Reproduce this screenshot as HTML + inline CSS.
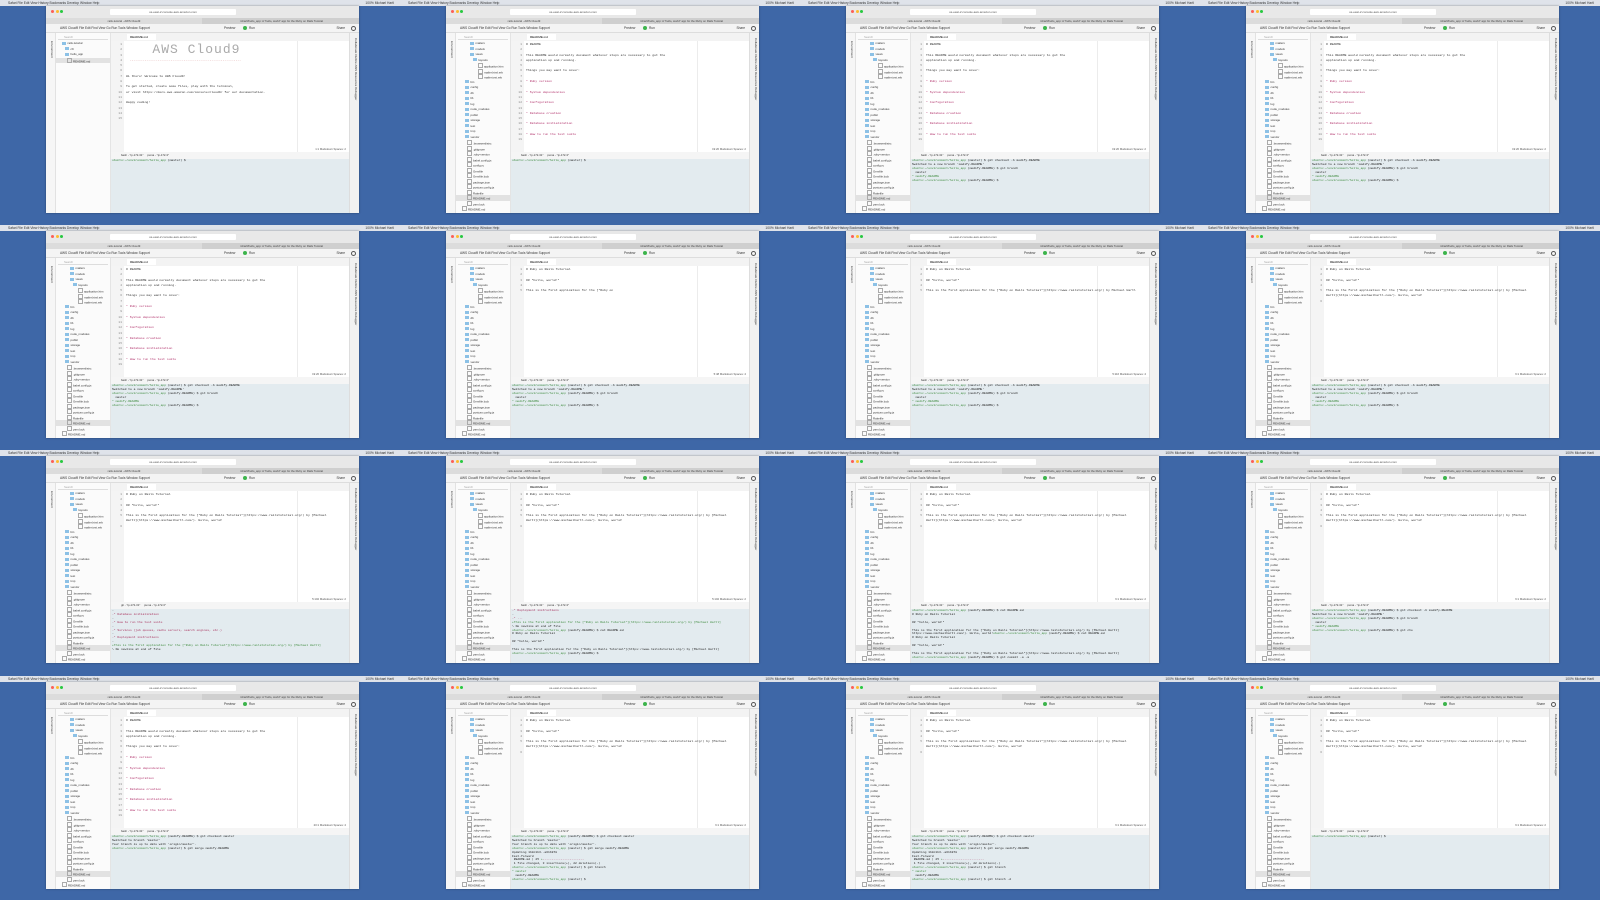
<!DOCTYPE html>
<html><head><meta charset="utf-8">
<style>
*{margin:0;padding:0;box-sizing:border-box}
body{width:1600px;height:900px;background:#3e67a7;position:relative;overflow:hidden;font-family:"Liberation Sans",sans-serif}
.mb{position:absolute;height:6px;width:400px;background:#dfe3ea;font-size:3.3px;line-height:6px;color:#333;white-space:nowrap;overflow:hidden;padding-left:8px}
.mb b{position:absolute;right:6px;top:0;font-weight:normal}
.w{position:absolute;width:313px;height:207px;background:#fff;overflow:hidden;box-shadow:0 0 2px rgba(0,0,0,.4)}
.tb{position:absolute;left:0;top:0;width:313px;height:12px;background:#e8e8e8}
.tl{position:absolute;top:4px;width:3px;height:3px;border-radius:50%}
.ad{position:absolute;left:64px;top:3px;width:126px;height:6px;background:#fff;border-radius:1px;font-size:3px;line-height:6px;text-align:center;color:#555}
.ts{position:absolute;left:0;top:12px;width:313px;height:6px;background:#cfcfcf;font-size:2.8px;line-height:6px;color:#444}
.ts i{position:absolute;left:0;top:0;width:156px;height:6px;background:#dcdcdc;text-align:center;font-style:normal}
.ts u{position:absolute;left:158px;width:155px;text-align:center;text-decoration:none}
.im{position:absolute;left:0;top:18px;width:313px;height:9px;background:#f4f4f4;border-bottom:1px solid #ddd;font-size:3.2px;line-height:9px;color:#333;padding-left:14px;white-space:nowrap}
.im .run{position:absolute;left:197px;color:#333}
.im .run:before{content:"";display:inline-block;width:4px;height:4px;border-radius:50%;background:#3cb44b;margin-right:2px;vertical-align:-1px}
.im .gear{position:absolute;right:3px;top:2px;width:5px;height:5px;border-radius:50%;border:1.3px solid #555}
.ls{position:absolute;left:0;top:27px;width:10px;height:180px;background:#f6f6f6;border-right:1px solid #e2e2e2}
.rs{position:absolute;right:0;top:27px;width:10px;height:180px;background:#f1f1f1;border-left:1px solid #ddd}
.vt{position:absolute;transform:rotate(90deg);transform-origin:0 0;font-size:3px;white-space:nowrap;color:#333}
.tr{position:absolute;left:10px;top:27px;width:55px;height:180px;background:#fbfbfb;border-right:1px solid #e4e4e4;font-size:2.9px;color:#333}
.tr .s{height:6px;margin:1px 2px;border-bottom:1px solid #ddd;color:#aaa;line-height:6px;padding-left:6px}
.tr p{height:5.5px;line-height:5.5px;white-space:nowrap}
.tr p.f:before{content:"";display:inline-block;width:4px;height:3px;background:#8cc1e6;margin-right:1.5px;vertical-align:-0.5px}
.tr p.d:before{content:"";display:inline-block;width:2.5px;height:3px;border:0.5px solid #aaa;margin-right:1.5px;vertical-align:-0.5px}
.tr p.sel{background:#e2e2e2}
.et{position:absolute;left:65px;top:27px;width:238px;height:8px;background:#f3f3f3;font-size:3px;line-height:8px;padding-left:16px}
.et span{background:#fff;padding:1px 8px 1px 3px}
.ed{position:absolute;left:65px;top:35px;width:238px;height:111px;background:#fff}
.gu{position:absolute;left:0;top:0;width:13px;height:111px;background:#f4f4f4;font-family:"Liberation Mono",monospace;font-size:3px;line-height:5.3px;text-align:right;padding-right:2px;color:#888;padding-top:1px}
.mg{position:absolute;left:186px;top:0;width:1px;height:111px;background:#ececec}
.cd{position:absolute;left:15px;top:1px;font-family:"Liberation Mono",monospace;font-size:3.1px;line-height:5.3px;color:#333;white-space:pre}
.cd .p{color:#b0306a}
.st{position:absolute;right:3px;bottom:1px;font-size:2.8px;color:#555}
.tt{position:absolute;left:65px;top:146px;width:238px;height:7px;background:#f5f5f5;font-size:2.8px;line-height:7px;padding-left:10px;white-space:pre;color:#333}
.tm{position:absolute;left:65px;top:153px;width:238px;height:54px;background:#e3ebef;font-family:"Liberation Mono",monospace;font-size:3px;line-height:3.9px;color:#222;white-space:pre;padding-left:1px;overflow:hidden}
.tm .g{color:#3c8a3c}
.tm .r{color:#a8305c}
</style></head><body>

<!-- template repeated -->
<div id="tiles"></div>

<!-- Row 1 -->
<div class="mb" style="left:0;top:0">Safari  File  Edit  View  History  Bookmarks  Develop  Window  Help<b>100% Michael Hartl</b></div>
<div class="mb" style="left:400px;top:0">Safari  File  Edit  View  History  Bookmarks  Develop  Window  Help<b>100% Michael Hartl</b></div>
<div class="mb" style="left:800px;top:0">Safari  File  Edit  View  History  Bookmarks  Develop  Window  Help<b>100% Michael Hartl</b></div>
<div class="mb" style="left:1200px;top:0">Safari  File  Edit  View  History  Bookmarks  Develop  Window  Help<b>100% Michael Hartl</b></div>
<div class="mb" style="left:0;top:225px">Safari  File  Edit  View  History  Bookmarks  Develop  Window  Help<b>100% Michael Hartl</b></div>
<div class="mb" style="left:400px;top:225px">Safari  File  Edit  View  History  Bookmarks  Develop  Window  Help<b>100% Michael Hartl</b></div>
<div class="mb" style="left:800px;top:225px">Safari  File  Edit  View  History  Bookmarks  Develop  Window  Help<b>100% Michael Hartl</b></div>
<div class="mb" style="left:1200px;top:225px">Safari  File  Edit  View  History  Bookmarks  Develop  Window  Help<b>100% Michael Hartl</b></div>
<div class="mb" style="left:0;top:450px">Safari  File  Edit  View  History  Bookmarks  Develop  Window  Help<b>100% Michael Hartl</b></div>
<div class="mb" style="left:400px;top:450px">Safari  File  Edit  View  History  Bookmarks  Develop  Window  Help<b>100% Michael Hartl</b></div>
<div class="mb" style="left:800px;top:450px">Safari  File  Edit  View  History  Bookmarks  Develop  Window  Help<b>100% Michael Hartl</b></div>
<div class="mb" style="left:1200px;top:450px">Safari  File  Edit  View  History  Bookmarks  Develop  Window  Help<b>100% Michael Hartl</b></div>
<div class="mb" style="left:0;top:676px">Safari  File  Edit  View  History  Bookmarks  Develop  Window  Help<b>100% Michael Hartl</b></div>
<div class="mb" style="left:400px;top:676px">Safari  File  Edit  View  History  Bookmarks  Develop  Window  Help<b>100% Michael Hartl</b></div>
<div class="mb" style="left:800px;top:676px">Safari  File  Edit  View  History  Bookmarks  Develop  Window  Help<b>100% Michael Hartl</b></div>
<div class="mb" style="left:1200px;top:676px">Safari  File  Edit  View  History  Bookmarks  Develop  Window  Help<b>100% Michael Hartl</b></div>

<!-- Tile 1 -->
<div class="w" style="left:46px;top:6px">
<div class="tb"><div class="tl" style="left:5px;background:#fc5f57"></div><div class="tl" style="left:9.5px;background:#fdbc2e"></div><div class="tl" style="left:14px;background:#28c840"></div><div class="ad">us-east-2.console.aws.amazon.com</div></div>
<div class="ts"><i>rails-tutorial - AWS Cloud9</i><u>mhartl/hello_app: A "hello, world" app for the Ruby on Rails Tutorial</u></div>
<div class="im">AWS Cloud9   File   Edit   Find   View   Go   Run   Tools   Window   Support<span class="run">Run</span><span style="position:absolute;left:178px">Preview</span><span style="position:absolute;right:14px">Share</span><span class="gear"></span></div>
<div class="ls"><div class="vt" style="left:8px;top:8px">Environment</div></div>
<div class="tr"><div class="s">Search</div><p style="padding-left:6px" class="f">rails-tutorial</p><p style="padding-left:9px" class="f">c9</p><p style="padding-left:9px" class="f">hello_app</p><p style="padding-left:11px" class="d sel">README.md</p></div>
<div class="et"><span>README.md</span></div>
<div class="ed"><div class="gu">1<br>2<br>3<br>4<br>5<br>6<br>7<br>8<br>9<br>10<br>11<br>12<br>13<br>14<br>15</div><div class="mg"></div>
<div class="cd"><span style="font-size:13px;line-height:16px;color:#aaa;letter-spacing:1px">   AWS Cloud9</span>
<span style="color:#c77">  ------------------------------------------------------------</span>


Hi there! Welcome to AWS Cloud9!

To get started, create some files, play with the terminal,
or visit https://docs.aws.amazon.com/console/cloud9/ for our documentation.

Happy coding!</div><div class="st">1:1  Markdown  Spaces: 2</div></div>
<div class="tt">bash - "ip-172-31"     puma - "ip-172-3"</div>
<div class="tm"><span class="g">ubuntu:~/environment/hello_app</span> (master) $ </div>
<div class="rs"><div class="vt" style="left:8px;top:5px">Collaborate   Outline   AWS Resources   Debugger</div></div>
</div>


<!-- Tile 2 -->
<div class="w" style="left:446px;top:6px">
<div class="tb"><div class="tl" style="left:5px;background:#fc5f57"></div><div class="tl" style="left:9.5px;background:#fdbc2e"></div><div class="tl" style="left:14px;background:#28c840"></div><div class="ad">us-east-2.console.aws.amazon.com</div></div>
<div class="ts"><i>rails-tutorial - AWS Cloud9</i><u>mhartl/hello_app: A "hello, world" app for the Ruby on Rails Tutorial</u></div>
<div class="im">AWS Cloud9   File   Edit   Find   View   Go   Run   Tools   Window   Support<span class="run">Run</span><span style="position:absolute;left:178px">Preview</span><span style="position:absolute;right:14px">Share</span><span class="gear"></span></div>
<div class="ls"><div class="vt" style="left:8px;top:8px">Environment</div></div>
<div class="tr"><div class="s">Search</div><p style="padding-left:14px" class="f">mailers</p><p style="padding-left:14px" class="f">models</p><p style="padding-left:14px" class="f">views</p><p style="padding-left:17px" class="f">layouts</p><p style="padding-left:22px" class="d">application.htm</p><p style="padding-left:22px" class="d">mailer.html.erb</p><p style="padding-left:22px" class="d">mailer.text.erb</p><p style="padding-left:9px" class="f">bin</p><p style="padding-left:9px" class="f">config</p><p style="padding-left:9px" class="f">db</p><p style="padding-left:9px" class="f">lib</p><p style="padding-left:9px" class="f">log</p><p style="padding-left:9px" class="f">node_modules</p><p style="padding-left:9px" class="f">public</p><p style="padding-left:9px" class="f">storage</p><p style="padding-left:9px" class="f">test</p><p style="padding-left:9px" class="f">tmp</p><p style="padding-left:9px" class="f">vendor</p><p style="padding-left:11px" class="d">.browserslistrc</p><p style="padding-left:11px" class="d">.gitignore</p><p style="padding-left:11px" class="d">.ruby-version</p><p style="padding-left:11px" class="d">babel.config.js</p><p style="padding-left:11px" class="d">config.ru</p><p style="padding-left:11px" class="d">Gemfile</p><p style="padding-left:11px" class="d">Gemfile.lock</p><p style="padding-left:11px" class="d">package.json</p><p style="padding-left:11px" class="d">postcss.config.js</p><p style="padding-left:11px" class="d">Rakefile</p><p style="padding-left:11px" class="d sel">README.md</p><p style="padding-left:11px" class="d">yarn.lock</p><p style="padding-left:6px" class="d">README.md</p></div>
<div class="et"><span>README.md</span></div>
<div class="ed"><div class="gu">1<br>2<br>3<br>4<br>5<br>6<br>7<br>8<br>9<br>10<br>11<br>12<br>13<br>14<br>15<br>16<br>17<br>18<br>19</div><div class="mg"></div>
<div class="cd"># README

This README would normally document whatever steps are necessary to get the
application up and running.

Things you may want to cover:

<span class="p">* Ruby version</span>

<span class="p">* System dependencies</span>

<span class="p">* Configuration</span>

<span class="p">* Database creation</span>

<span class="p">* Database initialization</span>

<span class="p">* How to run the test suite</span>
</div><div class="st">19:20  Markdown  Spaces: 2</div></div>
<div class="tt">bash - "ip-172-31"     puma - "ip-172-3"</div>
<div class="tm"><span class="g">ubuntu:~/environment/hello_app</span> (master) $ </div>
<div class="rs"><div class="vt" style="left:8px;top:5px">Collaborate   Outline   AWS Resources   Debugger</div></div>
</div>

<!-- Tiles 3-16 reuse the same structure -->
<div class="w" style="left:846px;top:6px">
<div class="tb"><div class="tl" style="left:5px;background:#fc5f57"></div><div class="tl" style="left:9.5px;background:#fdbc2e"></div><div class="tl" style="left:14px;background:#28c840"></div><div class="ad">us-east-2.console.aws.amazon.com</div></div>
<div class="ts"><i>rails-tutorial - AWS Cloud9</i><u>mhartl/hello_app: A "hello, world" app for the Ruby on Rails Tutorial</u></div>
<div class="im">AWS Cloud9   File   Edit   Find   View   Go   Run   Tools   Window   Support<span class="run">Run</span><span style="position:absolute;left:178px">Preview</span><span style="position:absolute;right:14px">Share</span><span class="gear"></span></div>
<div class="ls"><div class="vt" style="left:8px;top:8px">Environment</div></div>
<div class="tr"><div class="s">Search</div><p style="padding-left:14px" class="f">mailers</p><p style="padding-left:14px" class="f">models</p><p style="padding-left:14px" class="f">views</p><p style="padding-left:17px" class="f">layouts</p><p style="padding-left:22px" class="d">application.htm</p><p style="padding-left:22px" class="d">mailer.html.erb</p><p style="padding-left:22px" class="d">mailer.text.erb</p><p style="padding-left:9px" class="f">bin</p><p style="padding-left:9px" class="f">config</p><p style="padding-left:9px" class="f">db</p><p style="padding-left:9px" class="f">lib</p><p style="padding-left:9px" class="f">log</p><p style="padding-left:9px" class="f">node_modules</p><p style="padding-left:9px" class="f">public</p><p style="padding-left:9px" class="f">storage</p><p style="padding-left:9px" class="f">test</p><p style="padding-left:9px" class="f">tmp</p><p style="padding-left:9px" class="f">vendor</p><p style="padding-left:11px" class="d">.browserslistrc</p><p style="padding-left:11px" class="d">.gitignore</p><p style="padding-left:11px" class="d">.ruby-version</p><p style="padding-left:11px" class="d">babel.config.js</p><p style="padding-left:11px" class="d">config.ru</p><p style="padding-left:11px" class="d">Gemfile</p><p style="padding-left:11px" class="d">Gemfile.lock</p><p style="padding-left:11px" class="d">package.json</p><p style="padding-left:11px" class="d">postcss.config.js</p><p style="padding-left:11px" class="d">Rakefile</p><p style="padding-left:11px" class="d sel">README.md</p><p style="padding-left:11px" class="d">yarn.lock</p><p style="padding-left:6px" class="d">README.md</p></div>
<div class="et"><span>README.md</span></div>
<div class="ed"><div class="gu">1<br>2<br>3<br>4<br>5<br>6<br>7<br>8<br>9<br>10<br>11<br>12<br>13<br>14<br>15<br>16<br>17<br>18<br>19</div><div class="mg"></div>
<div class="cd"># README

This README would normally document whatever steps are necessary to get the
application up and running.

Things you may want to cover:

<span class="p">* Ruby version</span>

<span class="p">* System dependencies</span>

<span class="p">* Configuration</span>

<span class="p">* Database creation</span>

<span class="p">* Database initialization</span>

<span class="p">* How to run the test suite</span>
</div><div class="st">19:20  Markdown  Spaces: 2</div></div>
<div class="tt">bash - "ip-172-31"     puma - "ip-172-3"</div>
<div class="tm"><span class="g">ubuntu:~/environment/hello_app</span> (master) $ git checkout -b modify-README
Switched to a new branch 'modify-README'
<span class="g">ubuntu:~/environment/hello_app</span> (modify-README) $ git branch
  master
<span class="g">* modify-README</span>
<span class="g">ubuntu:~/environment/hello_app</span> (modify-README) $ </div>
<div class="rs"><div class="vt" style="left:8px;top:5px">Collaborate   Outline   AWS Resources   Debugger</div></div>
</div>

<div class="w" style="left:1246px;top:6px">
<div class="tb"><div class="tl" style="left:5px;background:#fc5f57"></div><div class="tl" style="left:9.5px;background:#fdbc2e"></div><div class="tl" style="left:14px;background:#28c840"></div><div class="ad">us-east-2.console.aws.amazon.com</div></div>
<div class="ts"><i>rails-tutorial - AWS Cloud9</i><u>mhartl/hello_app: A "hello, world" app for the Ruby on Rails Tutorial</u></div>
<div class="im">AWS Cloud9   File   Edit   Find   View   Go   Run   Tools   Window   Support<span class="run">Run</span><span style="position:absolute;left:178px">Preview</span><span style="position:absolute;right:14px">Share</span><span class="gear"></span></div>
<div class="ls"><div class="vt" style="left:8px;top:8px">Environment</div></div>
<div class="tr"><div class="s">Search</div><p style="padding-left:14px" class="f">mailers</p><p style="padding-left:14px" class="f">models</p><p style="padding-left:14px" class="f">views</p><p style="padding-left:17px" class="f">layouts</p><p style="padding-left:22px" class="d">application.htm</p><p style="padding-left:22px" class="d">mailer.html.erb</p><p style="padding-left:22px" class="d">mailer.text.erb</p><p style="padding-left:9px" class="f">bin</p><p style="padding-left:9px" class="f">config</p><p style="padding-left:9px" class="f">db</p><p style="padding-left:9px" class="f">lib</p><p style="padding-left:9px" class="f">log</p><p style="padding-left:9px" class="f">node_modules</p><p style="padding-left:9px" class="f">public</p><p style="padding-left:9px" class="f">storage</p><p style="padding-left:9px" class="f">test</p><p style="padding-left:9px" class="f">tmp</p><p style="padding-left:9px" class="f">vendor</p><p style="padding-left:11px" class="d">.browserslistrc</p><p style="padding-left:11px" class="d">.gitignore</p><p style="padding-left:11px" class="d">.ruby-version</p><p style="padding-left:11px" class="d">babel.config.js</p><p style="padding-left:11px" class="d">config.ru</p><p style="padding-left:11px" class="d">Gemfile</p><p style="padding-left:11px" class="d">Gemfile.lock</p><p style="padding-left:11px" class="d">package.json</p><p style="padding-left:11px" class="d">postcss.config.js</p><p style="padding-left:11px" class="d">Rakefile</p><p style="padding-left:11px" class="d sel">README.md</p><p style="padding-left:11px" class="d">yarn.lock</p><p style="padding-left:6px" class="d">README.md</p></div>
<div class="et"><span>README.md</span></div>
<div class="ed"><div class="gu">1<br>2<br>3<br>4<br>5<br>6<br>7<br>8<br>9<br>10<br>11<br>12<br>13<br>14<br>15<br>16<br>17<br>18<br>19</div><div class="mg"></div>
<div class="cd"># README

This README would normally document whatever steps are necessary to get the
application up and running.

Things you may want to cover:

<span class="p">* Ruby version</span>

<span class="p">* System dependencies</span>

<span class="p">* Configuration</span>

<span class="p">* Database creation</span>

<span class="p">* Database initialization</span>

<span class="p">* How to run the test suite</span>
</div><div class="st">19:20  Markdown  Spaces: 2</div></div>
<div class="tt">bash - "ip-172-31"     puma - "ip-172-3"</div>
<div class="tm"><span class="g">ubuntu:~/environment/hello_app</span> (master) $ git checkout -b modify-README
Switched to a new branch 'modify-README'
<span class="g">ubuntu:~/environment/hello_app</span> (modify-README) $ git branch
  master
<span class="g">* modify-README</span>
<span class="g">ubuntu:~/environment/hello_app</span> (modify-README) $ </div>
<div class="rs"><div class="vt" style="left:8px;top:5px">Collaborate   Outline   AWS Resources   Debugger</div></div>
</div>

<!-- Rows 2-4: ruby tutorial variant -->
<div class="w" style="left:46px;top:231px">
<div class="tb"><div class="tl" style="left:5px;background:#fc5f57"></div><div class="tl" style="left:9.5px;background:#fdbc2e"></div><div class="tl" style="left:14px;background:#28c840"></div><div class="ad">us-east-2.console.aws.amazon.com</div></div>
<div class="ts"><i>rails-tutorial - AWS Cloud9</i><u>mhartl/hello_app: A "hello, world" app for the Ruby on Rails Tutorial</u></div>
<div class="im">AWS Cloud9   File   Edit   Find   View   Go   Run   Tools   Window   Support<span class="run">Run</span><span style="position:absolute;left:178px">Preview</span><span style="position:absolute;right:14px">Share</span><span class="gear"></span></div>
<div class="ls"><div class="vt" style="left:8px;top:8px">Environment</div></div>
<div class="tr"><div class="s">Search</div><p style="padding-left:14px" class="f">mailers</p><p style="padding-left:14px" class="f">models</p><p style="padding-left:14px" class="f">views</p><p style="padding-left:17px" class="f">layouts</p><p style="padding-left:22px" class="d">application.htm</p><p style="padding-left:22px" class="d">mailer.html.erb</p><p style="padding-left:22px" class="d">mailer.text.erb</p><p style="padding-left:9px" class="f">bin</p><p style="padding-left:9px" class="f">config</p><p style="padding-left:9px" class="f">db</p><p style="padding-left:9px" class="f">lib</p><p style="padding-left:9px" class="f">log</p><p style="padding-left:9px" class="f">node_modules</p><p style="padding-left:9px" class="f">public</p><p style="padding-left:9px" class="f">storage</p><p style="padding-left:9px" class="f">test</p><p style="padding-left:9px" class="f">tmp</p><p style="padding-left:9px" class="f">vendor</p><p style="padding-left:11px" class="d">.browserslistrc</p><p style="padding-left:11px" class="d">.gitignore</p><p style="padding-left:11px" class="d">.ruby-version</p><p style="padding-left:11px" class="d">babel.config.js</p><p style="padding-left:11px" class="d">config.ru</p><p style="padding-left:11px" class="d">Gemfile</p><p style="padding-left:11px" class="d">Gemfile.lock</p><p style="padding-left:11px" class="d">package.json</p><p style="padding-left:11px" class="d">postcss.config.js</p><p style="padding-left:11px" class="d">Rakefile</p><p style="padding-left:11px" class="d sel">README.md</p><p style="padding-left:11px" class="d">yarn.lock</p><p style="padding-left:6px" class="d">README.md</p></div>
<div class="et"><span>README.md</span></div>
<div class="ed"><div class="gu">1<br>2<br>3<br>4<br>5<br>6<br>7<br>8<br>9<br>10<br>11<br>12<br>13<br>14<br>15<br>16<br>17<br>18<br>19</div><div class="mg"></div>
<div class="cd"># README

This README would normally document whatever steps are necessary to get the
application up and running.

Things you may want to cover:

<span class="p">* Ruby version</span>

<span class="p">* System dependencies</span>

<span class="p">* Configuration</span>

<span class="p">* Database creation</span>

<span class="p">* Database initialization</span>

<span class="p">* How to run the test suite</span>
</div><div class="st">19:20  Markdown  Spaces: 2</div></div>
<div class="tt">bash - "ip-172-31"     puma - "ip-172-3"</div>
<div class="tm"><span class="g">ubuntu:~/environment/hello_app</span> (master) $ git checkout -b modify-README
Switched to a new branch 'modify-README'
<span class="g">ubuntu:~/environment/hello_app</span> (modify-README) $ git branch
  master
<span class="g">* modify-README</span>
<span class="g">ubuntu:~/environment/hello_app</span> (modify-README) $ </div>
<div class="rs"><div class="vt" style="left:8px;top:5px">Collaborate   Outline   AWS Resources   Debugger</div></div>
</div>

<div class="w" style="left:446px;top:231px">
<div class="tb"><div class="tl" style="left:5px;background:#fc5f57"></div><div class="tl" style="left:9.5px;background:#fdbc2e"></div><div class="tl" style="left:14px;background:#28c840"></div><div class="ad">us-east-2.console.aws.amazon.com</div></div>
<div class="ts"><i>rails-tutorial - AWS Cloud9</i><u>mhartl/hello_app: A "hello, world" app for the Ruby on Rails Tutorial</u></div>
<div class="im">AWS Cloud9   File   Edit   Find   View   Go   Run   Tools   Window   Support<span class="run">Run</span><span style="position:absolute;left:178px">Preview</span><span style="position:absolute;right:14px">Share</span><span class="gear"></span></div>
<div class="ls"><div class="vt" style="left:8px;top:8px">Environment</div></div>
<div class="tr"><div class="s">Search</div><p style="padding-left:14px" class="f">mailers</p><p style="padding-left:14px" class="f">models</p><p style="padding-left:14px" class="f">views</p><p style="padding-left:17px" class="f">layouts</p><p style="padding-left:22px" class="d">application.htm</p><p style="padding-left:22px" class="d">mailer.html.erb</p><p style="padding-left:22px" class="d">mailer.text.erb</p><p style="padding-left:9px" class="f">bin</p><p style="padding-left:9px" class="f">config</p><p style="padding-left:9px" class="f">db</p><p style="padding-left:9px" class="f">lib</p><p style="padding-left:9px" class="f">log</p><p style="padding-left:9px" class="f">node_modules</p><p style="padding-left:9px" class="f">public</p><p style="padding-left:9px" class="f">storage</p><p style="padding-left:9px" class="f">test</p><p style="padding-left:9px" class="f">tmp</p><p style="padding-left:9px" class="f">vendor</p><p style="padding-left:11px" class="d">.browserslistrc</p><p style="padding-left:11px" class="d">.gitignore</p><p style="padding-left:11px" class="d">.ruby-version</p><p style="padding-left:11px" class="d">babel.config.js</p><p style="padding-left:11px" class="d">config.ru</p><p style="padding-left:11px" class="d">Gemfile</p><p style="padding-left:11px" class="d">Gemfile.lock</p><p style="padding-left:11px" class="d">package.json</p><p style="padding-left:11px" class="d">postcss.config.js</p><p style="padding-left:11px" class="d">Rakefile</p><p style="padding-left:11px" class="d sel">README.md</p><p style="padding-left:11px" class="d">yarn.lock</p><p style="padding-left:6px" class="d">README.md</p></div>
<div class="et"><span>README.md</span></div>
<div class="ed"><div class="gu">1<br>2<br>3<br>4<br>5</div><div class="mg"></div>
<div class="cd"># Ruby on Rails Tutorial

## "hello, world!"

This is the first application for the [*Ruby on </div><div class="st">5:48  Markdown  Spaces: 2</div></div>
<div class="tt">bash - "ip-172-31"     puma - "ip-172-3"</div>
<div class="tm"><span class="g">ubuntu:~/environment/hello_app</span> (master) $ git checkout -b modify-README
Switched to a new branch 'modify-README'
<span class="g">ubuntu:~/environment/hello_app</span> (modify-README) $ git branch
  master
<span class="g">* modify-README</span>
<span class="g">ubuntu:~/environment/hello_app</span> (modify-README) $ </div>
<div class="rs"><div class="vt" style="left:8px;top:5px">Collaborate   Outline   AWS Resources   Debugger</div></div>
</div>

<div class="w" style="left:846px;top:231px">
<div class="tb"><div class="tl" style="left:5px;background:#fc5f57"></div><div class="tl" style="left:9.5px;background:#fdbc2e"></div><div class="tl" style="left:14px;background:#28c840"></div><div class="ad">us-east-2.console.aws.amazon.com</div></div>
<div class="ts"><i>rails-tutorial - AWS Cloud9</i><u>mhartl/hello_app: A "hello, world" app for the Ruby on Rails Tutorial</u></div>
<div class="im">AWS Cloud9   File   Edit   Find   View   Go   Run   Tools   Window   Support<span class="run">Run</span><span style="position:absolute;left:178px">Preview</span><span style="position:absolute;right:14px">Share</span><span class="gear"></span></div>
<div class="ls"><div class="vt" style="left:8px;top:8px">Environment</div></div>
<div class="tr"><div class="s">Search</div><p style="padding-left:14px" class="f">mailers</p><p style="padding-left:14px" class="f">models</p><p style="padding-left:14px" class="f">views</p><p style="padding-left:17px" class="f">layouts</p><p style="padding-left:22px" class="d">application.htm</p><p style="padding-left:22px" class="d">mailer.html.erb</p><p style="padding-left:22px" class="d">mailer.text.erb</p><p style="padding-left:9px" class="f">bin</p><p style="padding-left:9px" class="f">config</p><p style="padding-left:9px" class="f">db</p><p style="padding-left:9px" class="f">lib</p><p style="padding-left:9px" class="f">log</p><p style="padding-left:9px" class="f">node_modules</p><p style="padding-left:9px" class="f">public</p><p style="padding-left:9px" class="f">storage</p><p style="padding-left:9px" class="f">test</p><p style="padding-left:9px" class="f">tmp</p><p style="padding-left:9px" class="f">vendor</p><p style="padding-left:11px" class="d">.browserslistrc</p><p style="padding-left:11px" class="d">.gitignore</p><p style="padding-left:11px" class="d">.ruby-version</p><p style="padding-left:11px" class="d">babel.config.js</p><p style="padding-left:11px" class="d">config.ru</p><p style="padding-left:11px" class="d">Gemfile</p><p style="padding-left:11px" class="d">Gemfile.lock</p><p style="padding-left:11px" class="d">package.json</p><p style="padding-left:11px" class="d">postcss.config.js</p><p style="padding-left:11px" class="d">Rakefile</p><p style="padding-left:11px" class="d sel">README.md</p><p style="padding-left:11px" class="d">yarn.lock</p><p style="padding-left:6px" class="d">README.md</p></div>
<div class="et"><span>README.md</span></div>
<div class="ed"><div class="gu">1<br>2<br>3<br>4<br>5</div><div class="mg"></div>
<div class="cd"># Ruby on Rails Tutorial

## "hello, world!"

This is the first application for the [*Ruby on Rails Tutorial*](https://www.railstutorial.org/) by Michael Hartl</div><div class="st">5:116  Markdown  Spaces: 2</div></div>
<div class="tt">bash - "ip-172-31"     puma - "ip-172-3"</div>
<div class="tm"><span class="g">ubuntu:~/environment/hello_app</span> (master) $ git checkout -b modify-README
Switched to a new branch 'modify-README'
<span class="g">ubuntu:~/environment/hello_app</span> (modify-README) $ git branch
  master
<span class="g">* modify-README</span>
<span class="g">ubuntu:~/environment/hello_app</span> (modify-README) $ </div>
<div class="rs"><div class="vt" style="left:8px;top:5px">Collaborate   Outline   AWS Resources   Debugger</div></div>
</div>

<div class="w" style="left:1246px;top:231px">
<div class="tb"><div class="tl" style="left:5px;background:#fc5f57"></div><div class="tl" style="left:9.5px;background:#fdbc2e"></div><div class="tl" style="left:14px;background:#28c840"></div><div class="ad">us-east-2.console.aws.amazon.com</div></div>
<div class="ts"><i>rails-tutorial - AWS Cloud9</i><u>mhartl/hello_app: A "hello, world" app for the Ruby on Rails Tutorial</u></div>
<div class="im">AWS Cloud9   File   Edit   Find   View   Go   Run   Tools   Window   Support<span class="run">Run</span><span style="position:absolute;left:178px">Preview</span><span style="position:absolute;right:14px">Share</span><span class="gear"></span></div>
<div class="ls"><div class="vt" style="left:8px;top:8px">Environment</div></div>
<div class="tr"><div class="s">Search</div><p style="padding-left:14px" class="f">mailers</p><p style="padding-left:14px" class="f">models</p><p style="padding-left:14px" class="f">views</p><p style="padding-left:17px" class="f">layouts</p><p style="padding-left:22px" class="d">application.htm</p><p style="padding-left:22px" class="d">mailer.html.erb</p><p style="padding-left:22px" class="d">mailer.text.erb</p><p style="padding-left:9px" class="f">bin</p><p style="padding-left:9px" class="f">config</p><p style="padding-left:9px" class="f">db</p><p style="padding-left:9px" class="f">lib</p><p style="padding-left:9px" class="f">log</p><p style="padding-left:9px" class="f">node_modules</p><p style="padding-left:9px" class="f">public</p><p style="padding-left:9px" class="f">storage</p><p style="padding-left:9px" class="f">test</p><p style="padding-left:9px" class="f">tmp</p><p style="padding-left:9px" class="f">vendor</p><p style="padding-left:11px" class="d">.browserslistrc</p><p style="padding-left:11px" class="d">.gitignore</p><p style="padding-left:11px" class="d">.ruby-version</p><p style="padding-left:11px" class="d">babel.config.js</p><p style="padding-left:11px" class="d">config.ru</p><p style="padding-left:11px" class="d">Gemfile</p><p style="padding-left:11px" class="d">Gemfile.lock</p><p style="padding-left:11px" class="d">package.json</p><p style="padding-left:11px" class="d">postcss.config.js</p><p style="padding-left:11px" class="d">Rakefile</p><p style="padding-left:11px" class="d sel">README.md</p><p style="padding-left:11px" class="d">yarn.lock</p><p style="padding-left:6px" class="d">README.md</p></div>
<div class="et"><span>README.md</span></div>
<div class="ed"><div class="gu">1<br>2<br>3<br>4<br>5<br><br>6</div><div class="mg"></div>
<div class="cd"># Ruby on Rails Tutorial

## "hello, world!"

This is the first application for the [*Ruby on Rails Tutorial*](https://www.railstutorial.org/) by [Michael
Hartl](https://www.michaelhartl.com/). Hello, world!
</div><div class="st">6:1  Markdown  Spaces: 2</div></div>
<div class="tt">bash - "ip-172-31"     puma - "ip-172-3"</div>
<div class="tm"><span class="g">ubuntu:~/environment/hello_app</span> (master) $ git checkout -b modify-README
Switched to a new branch 'modify-README'
<span class="g">ubuntu:~/environment/hello_app</span> (modify-README) $ git branch
  master
<span class="g">* modify-README</span>
<span class="g">ubuntu:~/environment/hello_app</span> (modify-README) $ </div>
<div class="rs"><div class="vt" style="left:8px;top:5px">Collaborate   Outline   AWS Resources   Debugger</div></div>
</div>

<!-- Row 3 -->
<div class="w" style="left:46px;top:456px">
<div class="tb"><div class="tl" style="left:5px;background:#fc5f57"></div><div class="tl" style="left:9.5px;background:#fdbc2e"></div><div class="tl" style="left:14px;background:#28c840"></div><div class="ad">us-east-2.console.aws.amazon.com</div></div>
<div class="ts"><i>rails-tutorial - AWS Cloud9</i><u>mhartl/hello_app: A "hello, world" app for the Ruby on Rails Tutorial</u></div>
<div class="im">AWS Cloud9   File   Edit   Find   View   Go   Run   Tools   Window   Support<span class="run">Run</span><span style="position:absolute;left:178px">Preview</span><span style="position:absolute;right:14px">Share</span><span class="gear"></span></div>
<div class="ls"><div class="vt" style="left:8px;top:8px">Environment</div></div>
<div class="tr"><div class="s">Search</div><p style="padding-left:14px" class="f">mailers</p><p style="padding-left:14px" class="f">models</p><p style="padding-left:14px" class="f">views</p><p style="padding-left:17px" class="f">layouts</p><p style="padding-left:22px" class="d">application.htm</p><p style="padding-left:22px" class="d">mailer.html.erb</p><p style="padding-left:22px" class="d">mailer.text.erb</p><p style="padding-left:9px" class="f">bin</p><p style="padding-left:9px" class="f">config</p><p style="padding-left:9px" class="f">db</p><p style="padding-left:9px" class="f">lib</p><p style="padding-left:9px" class="f">log</p><p style="padding-left:9px" class="f">node_modules</p><p style="padding-left:9px" class="f">public</p><p style="padding-left:9px" class="f">storage</p><p style="padding-left:9px" class="f">test</p><p style="padding-left:9px" class="f">tmp</p><p style="padding-left:9px" class="f">vendor</p><p style="padding-left:11px" class="d">.browserslistrc</p><p style="padding-left:11px" class="d">.gitignore</p><p style="padding-left:11px" class="d">.ruby-version</p><p style="padding-left:11px" class="d">babel.config.js</p><p style="padding-left:11px" class="d">config.ru</p><p style="padding-left:11px" class="d">Gemfile</p><p style="padding-left:11px" class="d">Gemfile.lock</p><p style="padding-left:11px" class="d">package.json</p><p style="padding-left:11px" class="d">postcss.config.js</p><p style="padding-left:11px" class="d">Rakefile</p><p style="padding-left:11px" class="d sel">README.md</p><p style="padding-left:11px" class="d">yarn.lock</p><p style="padding-left:6px" class="d">README.md</p></div>
<div class="et"><span>README.md</span></div>
<div class="ed"><div class="gu">1<br>2<br>3<br>4<br>5<br><br>6</div><div class="mg"></div>
<div class="cd"># Ruby on Rails Tutorial

## "hello, world!"

This is the first application for the [*Ruby on Rails Tutorial*](https://www.railstutorial.org/) by [Michael
Hartl](https://www.michaelhartl.com/). Hello, world!
</div><div class="st">5:102  Markdown  Spaces: 2</div></div>
<div class="tt">git - "ip-172-31"     puma - "ip-172-3"</div>
<div class="tm">-
<span class="r">-* Database initialization</span>
-
<span class="r">-* How to run the test suite</span>
-
<span class="r">-* Services (job queues, cache servers, search engines, etc.)</span>
-
<span class="r">-* Deployment instructions</span>
-
<span class="g">+This is the first application for the [*Ruby on Rails Tutorial*](https://www.railstutorial.org/) by [Michael Hartl]</span>
\ No newline at end of file</div>
<div class="rs"><div class="vt" style="left:8px;top:5px">Collaborate   Outline   AWS Resources   Debugger</div></div>
</div>

<div class="w" style="left:446px;top:456px">
<div class="tb"><div class="tl" style="left:5px;background:#fc5f57"></div><div class="tl" style="left:9.5px;background:#fdbc2e"></div><div class="tl" style="left:14px;background:#28c840"></div><div class="ad">us-east-2.console.aws.amazon.com</div></div>
<div class="ts"><i>rails-tutorial - AWS Cloud9</i><u>mhartl/hello_app: A "hello, world" app for the Ruby on Rails Tutorial</u></div>
<div class="im">AWS Cloud9   File   Edit   Find   View   Go   Run   Tools   Window   Support<span class="run">Run</span><span style="position:absolute;left:178px">Preview</span><span style="position:absolute;right:14px">Share</span><span class="gear"></span></div>
<div class="ls"><div class="vt" style="left:8px;top:8px">Environment</div></div>
<div class="tr"><div class="s">Search</div><p style="padding-left:14px" class="f">mailers</p><p style="padding-left:14px" class="f">models</p><p style="padding-left:14px" class="f">views</p><p style="padding-left:17px" class="f">layouts</p><p style="padding-left:22px" class="d">application.htm</p><p style="padding-left:22px" class="d">mailer.html.erb</p><p style="padding-left:22px" class="d">mailer.text.erb</p><p style="padding-left:9px" class="f">bin</p><p style="padding-left:9px" class="f">config</p><p style="padding-left:9px" class="f">db</p><p style="padding-left:9px" class="f">lib</p><p style="padding-left:9px" class="f">log</p><p style="padding-left:9px" class="f">node_modules</p><p style="padding-left:9px" class="f">public</p><p style="padding-left:9px" class="f">storage</p><p style="padding-left:9px" class="f">test</p><p style="padding-left:9px" class="f">tmp</p><p style="padding-left:9px" class="f">vendor</p><p style="padding-left:11px" class="d">.browserslistrc</p><p style="padding-left:11px" class="d">.gitignore</p><p style="padding-left:11px" class="d">.ruby-version</p><p style="padding-left:11px" class="d">babel.config.js</p><p style="padding-left:11px" class="d">config.ru</p><p style="padding-left:11px" class="d">Gemfile</p><p style="padding-left:11px" class="d">Gemfile.lock</p><p style="padding-left:11px" class="d">package.json</p><p style="padding-left:11px" class="d">postcss.config.js</p><p style="padding-left:11px" class="d">Rakefile</p><p style="padding-left:11px" class="d sel">README.md</p><p style="padding-left:11px" class="d">yarn.lock</p><p style="padding-left:6px" class="d">README.md</p></div>
<div class="et"><span>README.md</span></div>
<div class="ed"><div class="gu">1<br>2<br>3<br>4<br>5<br><br>6</div><div class="mg"></div>
<div class="cd"># Ruby on Rails Tutorial

## "hello, world!"

This is the first application for the [*Ruby on Rails Tutorial*](https://www.railstutorial.org/) by [Michael
Hartl](https://www.michaelhartl.com/). Hello, world!
</div><div class="st">5:102  Markdown  Spaces: 2</div></div>
<div class="tt">bash - "ip-172-31"     puma - "ip-172-3"</div>
<div class="tm"><span class="r">-* Deployment instructions</span>
-
<span class="r">-* ...</span>
<span class="g">+This is the first application for the [*Ruby on Rails Tutorial*](https://www.railstutorial.org/) by [Michael Hartl]</span>
\ No newline at end of file
<span class="g">ubuntu:~/environment/hello_app</span> (modify-README) $ cat README.md
# Ruby on Rails Tutorial

## "hello, world!"

This is the first application for the [*Ruby on Rails Tutorial*](https://www.railstutorial.org/) by [Michael Hartl]
<span class="g">ubuntu:~/environment/hello_app</span> (modify-README) $ </div>
<div class="rs"><div class="vt" style="left:8px;top:5px">Collaborate   Outline   AWS Resources   Debugger</div></div>
</div>

<div class="w" style="left:846px;top:456px">
<div class="tb"><div class="tl" style="left:5px;background:#fc5f57"></div><div class="tl" style="left:9.5px;background:#fdbc2e"></div><div class="tl" style="left:14px;background:#28c840"></div><div class="ad">us-east-2.console.aws.amazon.com</div></div>
<div class="ts"><i>rails-tutorial - AWS Cloud9</i><u>mhartl/hello_app: A "hello, world" app for the Ruby on Rails Tutorial</u></div>
<div class="im">AWS Cloud9   File   Edit   Find   View   Go   Run   Tools   Window   Support<span class="run">Run</span><span style="position:absolute;left:178px">Preview</span><span style="position:absolute;right:14px">Share</span><span class="gear"></span></div>
<div class="ls"><div class="vt" style="left:8px;top:8px">Environment</div></div>
<div class="tr"><div class="s">Search</div><p style="padding-left:14px" class="f">mailers</p><p style="padding-left:14px" class="f">models</p><p style="padding-left:14px" class="f">views</p><p style="padding-left:17px" class="f">layouts</p><p style="padding-left:22px" class="d">application.htm</p><p style="padding-left:22px" class="d">mailer.html.erb</p><p style="padding-left:22px" class="d">mailer.text.erb</p><p style="padding-left:9px" class="f">bin</p><p style="padding-left:9px" class="f">config</p><p style="padding-left:9px" class="f">db</p><p style="padding-left:9px" class="f">lib</p><p style="padding-left:9px" class="f">log</p><p style="padding-left:9px" class="f">node_modules</p><p style="padding-left:9px" class="f">public</p><p style="padding-left:9px" class="f">storage</p><p style="padding-left:9px" class="f">test</p><p style="padding-left:9px" class="f">tmp</p><p style="padding-left:9px" class="f">vendor</p><p style="padding-left:11px" class="d">.browserslistrc</p><p style="padding-left:11px" class="d">.gitignore</p><p style="padding-left:11px" class="d">.ruby-version</p><p style="padding-left:11px" class="d">babel.config.js</p><p style="padding-left:11px" class="d">config.ru</p><p style="padding-left:11px" class="d">Gemfile</p><p style="padding-left:11px" class="d">Gemfile.lock</p><p style="padding-left:11px" class="d">package.json</p><p style="padding-left:11px" class="d">postcss.config.js</p><p style="padding-left:11px" class="d">Rakefile</p><p style="padding-left:11px" class="d sel">README.md</p><p style="padding-left:11px" class="d">yarn.lock</p><p style="padding-left:6px" class="d">README.md</p></div>
<div class="et"><span>README.md</span></div>
<div class="ed"><div class="gu">1<br>2<br>3<br>4<br>5<br><br>6</div><div class="mg"></div>
<div class="cd"># Ruby on Rails Tutorial

## "hello, world!"

This is the first application for the [*Ruby on Rails Tutorial*](https://www.railstutorial.org/) by [Michael
Hartl](https://www.michaelhartl.com/). Hello, world!
</div><div class="st">6:1  Markdown  Spaces: 2</div></div>
<div class="tt">bash - "ip-172-31"     puma - "ip-172-3"</div>
<div class="tm"><span class="g">ubuntu:~/environment/hello_app</span> (modify-README) $ cat README.md
# Ruby on Rails Tutorial

## "hello, world!"

This is the first application for the [*Ruby on Rails Tutorial*](https://www.railstutorial.org/) by [Michael Hartl]
https://www.michaelhartl.com/). Hello, world!<span class="g">ubuntu:~/environment/hello_app</span> (modify-README) $ cat README.md
# Ruby on Rails Tutorial

## "hello, world!"

This is the first application for the [*Ruby on Rails Tutorial*](https://www.railstutorial.org/) by [Michael Hartl]
<span class="g">ubuntu:~/environment/hello_app</span> (modify-README) $ git commit -a -m </div>
<div class="rs"><div class="vt" style="left:8px;top:5px">Collaborate   Outline   AWS Resources   Debugger</div></div>
</div>

<div class="w" style="left:1246px;top:456px">
<div class="tb"><div class="tl" style="left:5px;background:#fc5f57"></div><div class="tl" style="left:9.5px;background:#fdbc2e"></div><div class="tl" style="left:14px;background:#28c840"></div><div class="ad">us-east-2.console.aws.amazon.com</div></div>
<div class="ts"><i>rails-tutorial - AWS Cloud9</i><u>mhartl/hello_app: A "hello, world" app for the Ruby on Rails Tutorial</u></div>
<div class="im">AWS Cloud9   File   Edit   Find   View   Go   Run   Tools   Window   Support<span class="run">Run</span><span style="position:absolute;left:178px">Preview</span><span style="position:absolute;right:14px">Share</span><span class="gear"></span></div>
<div class="ls"><div class="vt" style="left:8px;top:8px">Environment</div></div>
<div class="tr"><div class="s">Search</div><p style="padding-left:14px" class="f">mailers</p><p style="padding-left:14px" class="f">models</p><p style="padding-left:14px" class="f">views</p><p style="padding-left:17px" class="f">layouts</p><p style="padding-left:22px" class="d">application.htm</p><p style="padding-left:22px" class="d">mailer.html.erb</p><p style="padding-left:22px" class="d">mailer.text.erb</p><p style="padding-left:9px" class="f">bin</p><p style="padding-left:9px" class="f">config</p><p style="padding-left:9px" class="f">db</p><p style="padding-left:9px" class="f">lib</p><p style="padding-left:9px" class="f">log</p><p style="padding-left:9px" class="f">node_modules</p><p style="padding-left:9px" class="f">public</p><p style="padding-left:9px" class="f">storage</p><p style="padding-left:9px" class="f">test</p><p style="padding-left:9px" class="f">tmp</p><p style="padding-left:9px" class="f">vendor</p><p style="padding-left:11px" class="d">.browserslistrc</p><p style="padding-left:11px" class="d">.gitignore</p><p style="padding-left:11px" class="d">.ruby-version</p><p style="padding-left:11px" class="d">babel.config.js</p><p style="padding-left:11px" class="d">config.ru</p><p style="padding-left:11px" class="d">Gemfile</p><p style="padding-left:11px" class="d">Gemfile.lock</p><p style="padding-left:11px" class="d">package.json</p><p style="padding-left:11px" class="d">postcss.config.js</p><p style="padding-left:11px" class="d">Rakefile</p><p style="padding-left:11px" class="d sel">README.md</p><p style="padding-left:11px" class="d">yarn.lock</p><p style="padding-left:6px" class="d">README.md</p></div>
<div class="et"><span>README.md</span></div>
<div class="ed"><div class="gu">1<br>2<br>3<br>4<br>5<br><br>6</div><div class="mg"></div>
<div class="cd"># Ruby on Rails Tutorial

## "hello, world!"

This is the first application for the [*Ruby on Rails Tutorial*](https://www.railstutorial.org/) by [Michael
Hartl](https://www.michaelhartl.com/). Hello, world!
</div><div class="st">6:1  Markdown  Spaces: 2</div></div>
<div class="tt">bash - "ip-172-31"     puma - "ip-172-3"</div>
<div class="tm"><span class="g">ubuntu:~/environment/hello_app</span> (modify-README) $ git checkout -b modify-README
Switched to a new branch 'modify-README'
<span class="g">ubuntu:~/environment/hello_app</span> (modify-README) $ git branch
  master
<span class="g">* modify-README</span>
<span class="g">ubuntu:~/environment/hello_app</span> (modify-README) $ git che</div>
<div class="rs"><div class="vt" style="left:8px;top:5px">Collaborate   Outline   AWS Resources   Debugger</div></div>
</div>

<!-- Row 4 -->
<div class="w" style="left:46px;top:682px">
<div class="tb"><div class="tl" style="left:5px;background:#fc5f57"></div><div class="tl" style="left:9.5px;background:#fdbc2e"></div><div class="tl" style="left:14px;background:#28c840"></div><div class="ad">us-east-2.console.aws.amazon.com</div></div>
<div class="ts"><i>rails-tutorial - AWS Cloud9</i><u>mhartl/hello_app: A "hello, world" app for the Ruby on Rails Tutorial</u></div>
<div class="im">AWS Cloud9   File   Edit   Find   View   Go   Run   Tools   Window   Support<span class="run">Run</span><span style="position:absolute;left:178px">Preview</span><span style="position:absolute;right:14px">Share</span><span class="gear"></span></div>
<div class="ls"><div class="vt" style="left:8px;top:8px">Environment</div></div>
<div class="tr"><div class="s">Search</div><p style="padding-left:14px" class="f">mailers</p><p style="padding-left:14px" class="f">models</p><p style="padding-left:14px" class="f">views</p><p style="padding-left:17px" class="f">layouts</p><p style="padding-left:22px" class="d">application.htm</p><p style="padding-left:22px" class="d">mailer.html.erb</p><p style="padding-left:22px" class="d">mailer.text.erb</p><p style="padding-left:9px" class="f">bin</p><p style="padding-left:9px" class="f">config</p><p style="padding-left:9px" class="f">db</p><p style="padding-left:9px" class="f">lib</p><p style="padding-left:9px" class="f">log</p><p style="padding-left:9px" class="f">node_modules</p><p style="padding-left:9px" class="f">public</p><p style="padding-left:9px" class="f">storage</p><p style="padding-left:9px" class="f">test</p><p style="padding-left:9px" class="f">tmp</p><p style="padding-left:9px" class="f">vendor</p><p style="padding-left:11px" class="d">.browserslistrc</p><p style="padding-left:11px" class="d">.gitignore</p><p style="padding-left:11px" class="d">.ruby-version</p><p style="padding-left:11px" class="d">babel.config.js</p><p style="padding-left:11px" class="d">config.ru</p><p style="padding-left:11px" class="d">Gemfile</p><p style="padding-left:11px" class="d">Gemfile.lock</p><p style="padding-left:11px" class="d">package.json</p><p style="padding-left:11px" class="d">postcss.config.js</p><p style="padding-left:11px" class="d">Rakefile</p><p style="padding-left:11px" class="d sel">README.md</p><p style="padding-left:11px" class="d">yarn.lock</p><p style="padding-left:6px" class="d">README.md</p></div>
<div class="et"><span>README.md</span></div>
<div class="ed"><div class="gu">1<br>2<br>3<br>4<br>5<br>6<br>7<br>8<br>9<br>10<br>11<br>12<br>13<br>14<br>15<br>16<br>17<br>18<br>19</div><div class="mg"></div>
<div class="cd"># README

This README would normally document whatever steps are necessary to get the
application up and running.

Things you may want to cover:

<span class="p">* Ruby version</span>

<span class="p">* System dependencies</span>

<span class="p">* Configuration</span>

<span class="p">* Database creation</span>

<span class="p">* Database initialization</span>

<span class="p">* How to run the test suite</span>
</div><div class="st">20:1  Markdown  Spaces: 2</div></div>
<div class="tt">bash - "ip-172-31"     puma - "ip-172-3"</div>
<div class="tm"><span class="g">ubuntu:~/environment/hello_app</span> (modify-README) $ git checkout master
Switched to branch 'master'
Your branch is up to date with 'origin/master'.
<span class="g">ubuntu:~/environment/hello_app</span> (master) $ git merge modify-README </div>
<div class="rs"><div class="vt" style="left:8px;top:5px">Collaborate   Outline   AWS Resources   Debugger</div></div>
</div>

<div class="w" style="left:446px;top:682px">
<div class="tb"><div class="tl" style="left:5px;background:#fc5f57"></div><div class="tl" style="left:9.5px;background:#fdbc2e"></div><div class="tl" style="left:14px;background:#28c840"></div><div class="ad">us-east-2.console.aws.amazon.com</div></div>
<div class="ts"><i>rails-tutorial - AWS Cloud9</i><u>mhartl/hello_app: A "hello, world" app for the Ruby on Rails Tutorial</u></div>
<div class="im">AWS Cloud9   File   Edit   Find   View   Go   Run   Tools   Window   Support<span class="run">Run</span><span style="position:absolute;left:178px">Preview</span><span style="position:absolute;right:14px">Share</span><span class="gear"></span></div>
<div class="ls"><div class="vt" style="left:8px;top:8px">Environment</div></div>
<div class="tr"><div class="s">Search</div><p style="padding-left:14px" class="f">mailers</p><p style="padding-left:14px" class="f">models</p><p style="padding-left:14px" class="f">views</p><p style="padding-left:17px" class="f">layouts</p><p style="padding-left:22px" class="d">application.htm</p><p style="padding-left:22px" class="d">mailer.html.erb</p><p style="padding-left:22px" class="d">mailer.text.erb</p><p style="padding-left:9px" class="f">bin</p><p style="padding-left:9px" class="f">config</p><p style="padding-left:9px" class="f">db</p><p style="padding-left:9px" class="f">lib</p><p style="padding-left:9px" class="f">log</p><p style="padding-left:9px" class="f">node_modules</p><p style="padding-left:9px" class="f">public</p><p style="padding-left:9px" class="f">storage</p><p style="padding-left:9px" class="f">test</p><p style="padding-left:9px" class="f">tmp</p><p style="padding-left:9px" class="f">vendor</p><p style="padding-left:11px" class="d">.browserslistrc</p><p style="padding-left:11px" class="d">.gitignore</p><p style="padding-left:11px" class="d">.ruby-version</p><p style="padding-left:11px" class="d">babel.config.js</p><p style="padding-left:11px" class="d">config.ru</p><p style="padding-left:11px" class="d">Gemfile</p><p style="padding-left:11px" class="d">Gemfile.lock</p><p style="padding-left:11px" class="d">package.json</p><p style="padding-left:11px" class="d">postcss.config.js</p><p style="padding-left:11px" class="d">Rakefile</p><p style="padding-left:11px" class="d sel">README.md</p><p style="padding-left:11px" class="d">yarn.lock</p><p style="padding-left:6px" class="d">README.md</p></div>
<div class="et"><span>README.md</span></div>
<div class="ed"><div class="gu">1<br>2<br>3<br>4<br>5<br><br>6</div><div class="mg"></div>
<div class="cd"># Ruby on Rails Tutorial

## "hello, world!"

This is the first application for the [*Ruby on Rails Tutorial*](https://www.railstutorial.org/) by [Michael
Hartl](https://www.michaelhartl.com/). Hello, world!
</div><div class="st">6:1  Markdown  Spaces: 2</div></div>
<div class="tt">bash - "ip-172-31"     puma - "ip-172-3"</div>
<div class="tm"><span class="g">ubuntu:~/environment/hello_app</span> (modify-README) $ git checkout master
Switched to branch 'master'
Your branch is up to date with 'origin/master'.
<span class="g">ubuntu:~/environment/hello_app</span> (master) $ git merge modify-README
Updating 1b0c1b3..a61b978
Fast-forward
 README.md | 25 <span class="g">+</span><span class="r">-----------------------</span>
 1 file changed, 3 insertions(+), 22 deletions(-)
<span class="g">ubuntu:~/environment/hello_app</span> (master) $ git branch
<span class="g">* master</span>
  modify-README
<span class="g">ubuntu:~/environment/hello_app</span> (master) $ </div>
<div class="rs"><div class="vt" style="left:8px;top:5px">Collaborate   Outline   AWS Resources   Debugger</div></div>
</div>

<div class="w" style="left:846px;top:682px">
<div class="tb"><div class="tl" style="left:5px;background:#fc5f57"></div><div class="tl" style="left:9.5px;background:#fdbc2e"></div><div class="tl" style="left:14px;background:#28c840"></div><div class="ad">us-east-2.console.aws.amazon.com</div></div>
<div class="ts"><i>rails-tutorial - AWS Cloud9</i><u>mhartl/hello_app: A "hello, world" app for the Ruby on Rails Tutorial</u></div>
<div class="im">AWS Cloud9   File   Edit   Find   View   Go   Run   Tools   Window   Support<span class="run">Run</span><span style="position:absolute;left:178px">Preview</span><span style="position:absolute;right:14px">Share</span><span class="gear"></span></div>
<div class="ls"><div class="vt" style="left:8px;top:8px">Environment</div></div>
<div class="tr"><div class="s">Search</div><p style="padding-left:14px" class="f">mailers</p><p style="padding-left:14px" class="f">models</p><p style="padding-left:14px" class="f">views</p><p style="padding-left:17px" class="f">layouts</p><p style="padding-left:22px" class="d">application.htm</p><p style="padding-left:22px" class="d">mailer.html.erb</p><p style="padding-left:22px" class="d">mailer.text.erb</p><p style="padding-left:9px" class="f">bin</p><p style="padding-left:9px" class="f">config</p><p style="padding-left:9px" class="f">db</p><p style="padding-left:9px" class="f">lib</p><p style="padding-left:9px" class="f">log</p><p style="padding-left:9px" class="f">node_modules</p><p style="padding-left:9px" class="f">public</p><p style="padding-left:9px" class="f">storage</p><p style="padding-left:9px" class="f">test</p><p style="padding-left:9px" class="f">tmp</p><p style="padding-left:9px" class="f">vendor</p><p style="padding-left:11px" class="d">.browserslistrc</p><p style="padding-left:11px" class="d">.gitignore</p><p style="padding-left:11px" class="d">.ruby-version</p><p style="padding-left:11px" class="d">babel.config.js</p><p style="padding-left:11px" class="d">config.ru</p><p style="padding-left:11px" class="d">Gemfile</p><p style="padding-left:11px" class="d">Gemfile.lock</p><p style="padding-left:11px" class="d">package.json</p><p style="padding-left:11px" class="d">postcss.config.js</p><p style="padding-left:11px" class="d">Rakefile</p><p style="padding-left:11px" class="d sel">README.md</p><p style="padding-left:11px" class="d">yarn.lock</p><p style="padding-left:6px" class="d">README.md</p></div>
<div class="et"><span>README.md</span></div>
<div class="ed"><div class="gu">1<br>2<br>3<br>4<br>5<br><br>6</div><div class="mg"></div>
<div class="cd"># Ruby on Rails Tutorial

## "hello, world!"

This is the first application for the [*Ruby on Rails Tutorial*](https://www.railstutorial.org/) by [Michael
Hartl](https://www.michaelhartl.com/). Hello, world!
</div><div class="st">6:1  Markdown  Spaces: 2</div></div>
<div class="tt">bash - "ip-172-31"     puma - "ip-172-3"</div>
<div class="tm"><span class="g">ubuntu:~/environment/hello_app</span> (modify-README) $ git checkout master
Switched to branch 'master'
Your branch is up to date with 'origin/master'.
<span class="g">ubuntu:~/environment/hello_app</span> (master) $ git merge modify-README
Updating 1b0c1b3..a61b978
Fast-forward
 README.md | 25 <span class="g">+</span><span class="r">-----------------------</span>
 1 file changed, 3 insertions(+), 22 deletions(-)
<span class="g">ubuntu:~/environment/hello_app</span> (master) $ git branch
<span class="g">* master</span>
  modify-README
<span class="g">ubuntu:~/environment/hello_app</span> (master) $ git branch -d</div>
<div class="rs"><div class="vt" style="left:8px;top:5px">Collaborate   Outline   AWS Resources   Debugger</div></div>
</div>

<div class="w" style="left:1246px;top:682px">
<div class="tb"><div class="tl" style="left:5px;background:#fc5f57"></div><div class="tl" style="left:9.5px;background:#fdbc2e"></div><div class="tl" style="left:14px;background:#28c840"></div><div class="ad">us-east-2.console.aws.amazon.com</div></div>
<div class="ts"><i>rails-tutorial - AWS Cloud9</i><u>mhartl/hello_app: A "hello, world" app for the Ruby on Rails Tutorial</u></div>
<div class="im">AWS Cloud9   File   Edit   Find   View   Go   Run   Tools   Window   Support<span class="run">Run</span><span style="position:absolute;left:178px">Preview</span><span style="position:absolute;right:14px">Share</span><span class="gear"></span></div>
<div class="ls"><div class="vt" style="left:8px;top:8px">Environment</div></div>
<div class="tr"><div class="s">Search</div><p style="padding-left:14px" class="f">mailers</p><p style="padding-left:14px" class="f">models</p><p style="padding-left:14px" class="f">views</p><p style="padding-left:17px" class="f">layouts</p><p style="padding-left:22px" class="d">application.htm</p><p style="padding-left:22px" class="d">mailer.html.erb</p><p style="padding-left:22px" class="d">mailer.text.erb</p><p style="padding-left:9px" class="f">bin</p><p style="padding-left:9px" class="f">config</p><p style="padding-left:9px" class="f">db</p><p style="padding-left:9px" class="f">lib</p><p style="padding-left:9px" class="f">log</p><p style="padding-left:9px" class="f">node_modules</p><p style="padding-left:9px" class="f">public</p><p style="padding-left:9px" class="f">storage</p><p style="padding-left:9px" class="f">test</p><p style="padding-left:9px" class="f">tmp</p><p style="padding-left:9px" class="f">vendor</p><p style="padding-left:11px" class="d">.browserslistrc</p><p style="padding-left:11px" class="d">.gitignore</p><p style="padding-left:11px" class="d">.ruby-version</p><p style="padding-left:11px" class="d">babel.config.js</p><p style="padding-left:11px" class="d">config.ru</p><p style="padding-left:11px" class="d">Gemfile</p><p style="padding-left:11px" class="d">Gemfile.lock</p><p style="padding-left:11px" class="d">package.json</p><p style="padding-left:11px" class="d">postcss.config.js</p><p style="padding-left:11px" class="d">Rakefile</p><p style="padding-left:11px" class="d sel">README.md</p><p style="padding-left:11px" class="d">yarn.lock</p><p style="padding-left:6px" class="d">README.md</p></div>
<div class="et"><span>README.md</span></div>
<div class="ed"><div class="gu">1<br>2<br>3<br>4<br>5<br><br>6</div><div class="mg"></div>
<div class="cd"># Ruby on Rails Tutorial

## "hello, world!"

This is the first application for the [*Ruby on Rails Tutorial*](https://www.railstutorial.org/) by [Michael
Hartl](https://www.michaelhartl.com/). Hello, world!
</div><div class="st">6:1  Markdown  Spaces: 2</div></div>
<div class="tt">bash - "ip-172-31"     puma - "ip-172-3"</div>
<div class="tm"><span class="g">ubuntu:~/environment/hello_app</span> (master) $ </div>
<div class="rs"><div class="vt" style="left:8px;top:5px">Collaborate   Outline   AWS Resources   Debugger</div></div>
</div>

</body></html>
